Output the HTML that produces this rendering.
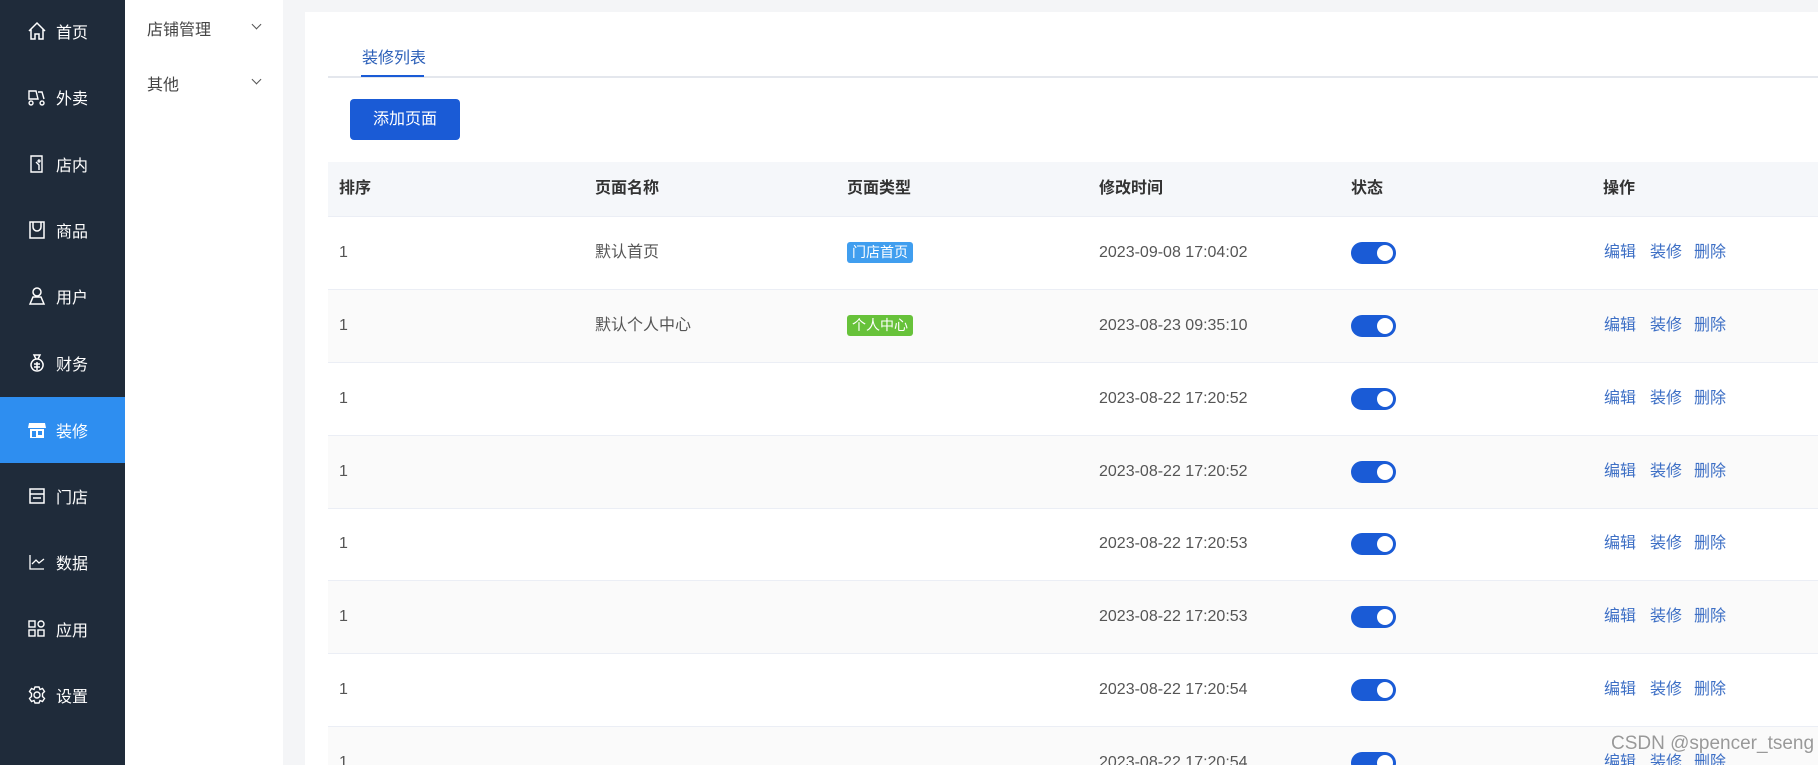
<!DOCTYPE html>
<html style="height:765px;overflow:hidden"><head><meta charset="utf-8"><style>
*{margin:0;padding:0;box-sizing:border-box}
body{width:1818px;height:765px;overflow:hidden;background:#f4f5f7;font-family:"Liberation Sans","Noto Sans CJK SC",sans-serif;position:relative}
.side{position:absolute;left:0;top:0;width:125px;height:765px;background:#1f2b3a}
.nav{position:absolute;left:0;width:125px;height:66px;color:#fff;font-size:16px;display:flex;align-items:center}
.nav svg{position:absolute;left:27px;top:23px;width:20px;height:20px}
.nav span{position:absolute;left:56px}
.nav.act{background:#2e8ef0}
.sub{position:absolute;left:125px;top:0;width:158px;height:765px;background:#fff}
.sub div{position:absolute;left:22px;font-size:16px;color:#444}
.sub i{position:absolute;left:128px;width:7px;height:7px;border-right:1.5px solid #555;border-bottom:1.5px solid #555;transform:rotate(45deg)}
.card{position:absolute;left:305px;top:12px;width:1513px;height:753px;background:#fff}
.abs{position:absolute}
.wrap{position:absolute;left:0;top:0;width:1818px;height:765px;overflow:hidden}
.row{position:absolute;left:328px;width:1490px;height:73px;border-bottom:1px solid #ebeef5;font-size:16px;color:#555}
.row div{position:absolute;top:0;line-height:72px}
.row .tag{position:absolute;top:25px;height:21px;line-height:21px;font-size:14px;color:#fff;padding:0 5px;border-radius:3px}
.sw{position:absolute;left:1023px;top:25px;width:45px;height:22px;border-radius:11px;background:#1a5bd6}
.sw:after{content:"";position:absolute;right:3px;top:3px;width:16px;height:16px;border-radius:50%;background:#fff}
.lk{color:#3d6fc5}
.e{background:#fafafa}
</style></head><body><div class="wrap">
<div class="side">
<div class="nav" style="top:-2px"><svg viewBox="0 0 20 20" fill="none" stroke="#fff" stroke-width="1.5"><path d="M2 10L10 2l8 8M4 8v10h4v-5h4v5h4V8"/></svg><span>首页</span></div>
<div class="nav" style="top:64px"><svg viewBox="0 0 20 20" fill="none" stroke="#fff" stroke-width="1.4"><path d="M2 4h7l2 8H2zM11 5h4l2 7M4 14a2 2 0 1 0 .1 0M15 14a2 2 0 1 0 .1 0"/></svg><span>外卖</span></div>
<div class="nav" style="top:131px"><svg viewBox="0 0 20 20" fill="none" stroke="#fff" stroke-width="1.4"><path d="M4 2h11v16H4zM9 8l3 3v5M12 6a1 1 0 1 0 .1 0"/></svg><span>店内</span></div>
<div class="nav" style="top:197px"><svg viewBox="0 0 20 20" fill="none" stroke="#fff" stroke-width="1.5"><path d="M3 2h14v16H3zM6 2v5a4 4 0 0 0 8 0V2"/></svg><span>商品</span></div>
<div class="nav" style="top:263px"><svg viewBox="0 0 20 20" fill="none" stroke="#fff" stroke-width="1.5"><circle cx="10" cy="6" r="4"/><path d="M3 18l3-7h8l3 7z"/></svg><span>用户</span></div>
<div class="nav" style="top:330px"><svg viewBox="0 0 20 20" fill="none" stroke="#fff" stroke-width="1.5"><path d="M7 2h6l-2 4h-2zM10 6a6 6 0 1 0 .1 0M7 11h6M7 14h6M10 9v8"/></svg><span>财务</span></div>
<div class="nav act" style="top:397px"><svg viewBox="0 0 20 20" fill="#fff"><path d="M2 3h16l1 5H1zM3 9h14v9H3z"/><rect x="5" y="11" width="4" height="6" fill="#2e8ef0"/><rect x="11" y="11" width="4" height="4" fill="#2e8ef0"/></svg><span>装修</span></div>
<div class="nav" style="top:463px"><svg viewBox="0 0 20 20" fill="none" stroke="#fff" stroke-width="1.5"><path d="M3 3h14v14H3zM3 8h14M6 12h8"/></svg><span>门店</span></div>
<div class="nav" style="top:529px"><svg viewBox="0 0 20 20" fill="none" stroke="#fff" stroke-width="1.3"><path d="M3 3v14h14M5 12l4-4 3 3 5-4"/></svg><span>数据</span></div>
<div class="nav" style="top:596px"><svg viewBox="0 0 20 20" fill="none" stroke="#fff" stroke-width="1.4"><rect x="2" y="2" width="6" height="6"/><rect x="2" y="11" width="6" height="6"/><rect x="11" y="11" width="6" height="6"/><circle cx="14" cy="5" r="3"/></svg><span>应用</span></div>
<div class="nav" style="top:662px"><svg viewBox="0 0 20 20" fill="none" stroke="#fff" stroke-width="1.4"><circle cx="10" cy="10" r="3"/><path d="M8 2h4l1 2.5 2.5-1 2 3-2 2v3l2 2-2 3-2.5-1-1 2.5H8l-1-2.5-2.5 1-2-3 2-2v-3l-2-2 2-3 2.5 1z"/></svg><span>设置</span></div>
</div>
<div class="sub">
<div style="top:16px">店铺管理</div><i style="top:21px"></i>
<div style="top:71px">其他</div><i style="top:76px"></i>
</div>
<div class="card"></div>
<div class="abs" style="left:362px;top:44px;font-size:16px;color:#2b5fb8">装修列表</div>
<div class="abs" style="left:328px;top:76px;width:1490px;height:2px;background:#e4e7ed"></div>
<div class="abs" style="left:361px;top:75px;width:63px;height:2px;background:#1a5bd6"></div>
<div class="abs" style="left:350px;top:99px;width:110px;height:41px;background:#1a5bd6;border-radius:4px;color:#fff;font-size:16px;line-height:41px;text-align:center">添加页面</div>
<div class="row" style="top:162px;height:55px;background:#f5f7fa;color:#333;font-weight:bold">
<div style="left:11px;line-height:54px">排序</div><div style="left:267px;line-height:54px">页面名称</div><div style="left:519px;line-height:54px">页面类型</div><div style="left:771px;line-height:54px">修改时间</div><div style="left:1023px;line-height:54px">状态</div><div style="left:1275px;line-height:54px">操作</div>
</div>
<div class="row" style="top:217px"><div style="left:11px">1</div><div style="left:267px">默认首页</div><span class="tag" style="left:519px;background:#409eef">门店首页</span><div style="left:771px">2023-09-08 17:04:02</div><span class="sw"></span><div class="lk" style="left:1276px">编辑</div><div class="lk" style="left:1322px">装修</div><div class="lk" style="left:1366px">删除</div></div>
<div class="row e" style="top:290px"><div style="left:11px">1</div><div style="left:267px">默认个人中心</div><span class="tag" style="left:519px;background:#67c23a">个人中心</span><div style="left:771px">2023-08-23 09:35:10</div><span class="sw"></span><div class="lk" style="left:1276px">编辑</div><div class="lk" style="left:1322px">装修</div><div class="lk" style="left:1366px">删除</div></div>
<div class="row" style="top:363px"><div style="left:11px">1</div><div style="left:771px">2023-08-22 17:20:52</div><span class="sw"></span><div class="lk" style="left:1276px">编辑</div><div class="lk" style="left:1322px">装修</div><div class="lk" style="left:1366px">删除</div></div>
<div class="row e" style="top:436px"><div style="left:11px">1</div><div style="left:771px">2023-08-22 17:20:52</div><span class="sw"></span><div class="lk" style="left:1276px">编辑</div><div class="lk" style="left:1322px">装修</div><div class="lk" style="left:1366px">删除</div></div>
<div class="row" style="top:508px"><div style="left:11px">1</div><div style="left:771px">2023-08-22 17:20:53</div><span class="sw"></span><div class="lk" style="left:1276px">编辑</div><div class="lk" style="left:1322px">装修</div><div class="lk" style="left:1366px">删除</div></div>
<div class="row e" style="top:581px"><div style="left:11px">1</div><div style="left:771px">2023-08-22 17:20:53</div><span class="sw"></span><div class="lk" style="left:1276px">编辑</div><div class="lk" style="left:1322px">装修</div><div class="lk" style="left:1366px">删除</div></div>
<div class="row" style="top:654px"><div style="left:11px">1</div><div style="left:771px">2023-08-22 17:20:54</div><span class="sw"></span><div class="lk" style="left:1276px">编辑</div><div class="lk" style="left:1322px">装修</div><div class="lk" style="left:1366px">删除</div></div>
<div class="row e" style="top:727px"><div style="left:11px">1</div><div style="left:771px">2023-08-22 17:20:54</div><span class="sw"></span><div class="lk" style="left:1276px">编辑</div><div class="lk" style="left:1322px">装修</div><div class="lk" style="left:1366px">删除</div></div>
<div class="abs" style="left:1611px;top:733px;font-size:19px;color:#999;text-shadow:0 0 2px #fff">CSDN @spencer_tseng</div>
</div></body></html>
